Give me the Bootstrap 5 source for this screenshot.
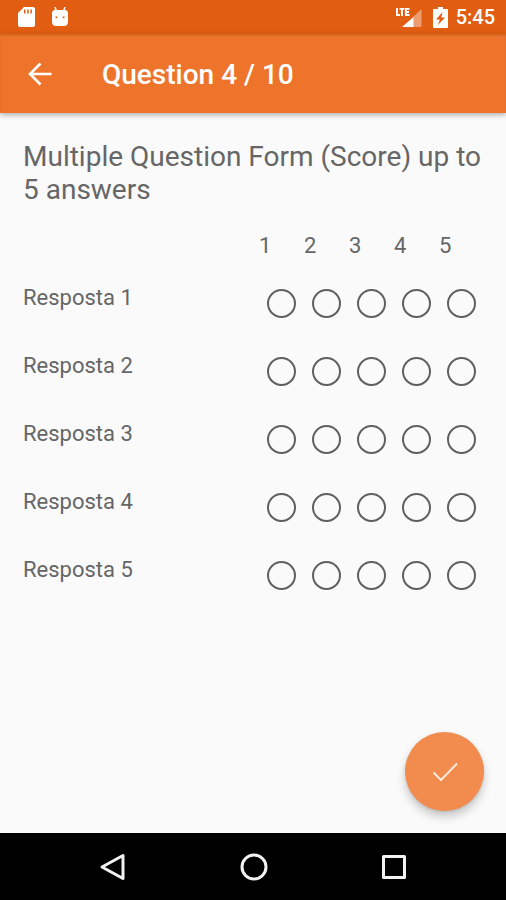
<!DOCTYPE html>
<html lang="en">
<head>
<meta charset="utf-8">
<meta name="viewport" content="width=device-width, initial-scale=1">
<title>Question 4 / 10</title>
<link href="https://cdn.jsdelivr.net/npm/bootstrap@5.3.0/dist/css/bootstrap.min.css" rel="stylesheet">
<style>
  body { font-family: Roboto, sans-serif; background: #fafafa; color: #666; }
  .status-bar { background: #e05d11; height: 34px; padding: 0 11px 0 18px; font-size: 20px; line-height: 36px; }
  .app-bar { background: #ee742c; height: 79px; padding: 0 22px; box-shadow: 0 2px 5px rgba(0,0,0,.3), inset 0 2px 3px -1px rgba(150,60,0,.4); }
  .app-title { font-size: 28px; line-height: 32px; margin-left: 44px; padding-top: 2px; }
  .icon-btn { width: 36px; height: 36px; }
  .page-body { padding: 27px 22px 22px 23px; }
  .question { font-size: 28px; line-height: 33px; font-weight: 400; }
  .score-grid { table-layout: fixed; font-size: 22px; line-height: 26px; margin-top: 27px; }
  .score-grid th { font-weight: 400; padding: 0; vertical-align: top; }
  .score-col { width: 45px; }
  .score-grid thead th { height: 40px; }
  .score-grid tbody th { height: 68px; padding-top: 12px; }
  .score-grid td { height: 68px; padding: 16px 0 0 8px; vertical-align: top; }
  .score-radio.form-check-input { width: 29px; height: 29px; border: 2px solid #606060; background-color: transparent; }
  .score-radio.form-check-input:checked { background-color: #ee742c; border-color: #ee742c; }
  .fab { width: 79px; height: 79px; background: #f18b4e; box-shadow: 0 6px 10px rgba(0,0,0,.2), 0 1px 3px rgba(0,0,0,.1); }
  .system-nav { height: 67px; padding: 0 78px 0 79px; }
  .nav-key { width: 68px; height: 48px; }
</style>
<script src="https://cdn.jsdelivr.net/npm/bootstrap@5.3.0/dist/js/bootstrap.bundle.min.js" defer></script>
</head>
<body>
<div class="d-flex flex-column min-vh-100">
  <div class="status-bar d-flex align-items-center text-white fw-medium">
    <svg width="17" height="21" viewBox="0 0 17 21" aria-hidden="true"><path fill="#fff" fill-rule="evenodd" d="M6 0h9q2 0 2 2v16q0 2-2 2H2q-2 0-2-2V6zM6 2.500v4h1.500v-4zm3.200 0v4h1.500v-4zm3.200 0v4h1.500v-4z"/></svg>
    <svg class="ms-3" width="18" height="20" viewBox="0 0 18 20" aria-hidden="true"><path stroke="#fff" stroke-width="1.500" d="M4 0l1.500 4M14 0l-1.500 4"/><path fill="#fff" fill-rule="evenodd" d="M3 3h12l2 2V15q0 4-4 4H5q-4 0-4-4V5zM4.500 9.500v1.800h1.800V9.500zm7.200 0v1.800h1.800V9.500z"/></svg>
    <svg class="ms-auto" width="29" height="22" viewBox="0 0 29 22" role="img" aria-label="LTE signal">
      <path fill="#fff" opacity=".4" d="M25.500 3v18H17V11z"/><path fill="#fff" d="M17.500 11v10H6z"/>
      <path fill="none" stroke="#fff" stroke-width="1.900" d="M1 2v7h3M3.500 2.900h5M6 3v7M13.500 2.900H10V9H13.500M10 6h3"/>
    </svg>
    <svg class="ms-2" width="15" height="21" viewBox="0 0 15 21" role="img" aria-label="Charging"><path fill="#fff" d="M5 0h5v2h4q1 0 1 1v17q0 1-1 1H1q-1 0-1-1V3q0-1 1-1h4z"/><path fill="#e05d11" d="M9.500 5L3 12.500h3.800L5 18l7-7.500H8.200z"/></svg>
    <span class="ms-2">5:45</span>
  </div>
  <header class="app-bar d-flex align-items-center">
    <button type="button" class="icon-btn btn p-0 border-0 d-flex align-items-center justify-content-center" aria-label="Back">
      <svg width="24" height="24" viewBox="0 0 24 24" fill="none" stroke="#fff" stroke-width="2.600"><path d="M23.500 12H3M12.500 1.500L2 12l10.500 10.500"/></svg>
    </button>
    <h1 class="app-title mb-0 text-white fw-medium">Question 4 / 10</h1>
  </header>
  <main class="page-body flex-grow-1 d-flex">
    <form class="w-100 d-flex flex-column">
      <h2 class="question mb-0">Multiple Question Form (Score) up to 5 answers</h2>
      <table class="score-grid w-100">
        <colgroup><col><col class="score-col"><col class="score-col"><col class="score-col"><col class="score-col"><col class="score-col"></colgroup>
        <thead><tr><td class="p-0 h-auto"></td><th scope="col">1</th><th scope="col">2</th><th scope="col">3</th><th scope="col">4</th><th scope="col">5</th></tr></thead>
        <tbody>
          <tr><th scope="row">Resposta 1</th>
            <td><input class="score-radio form-check-input d-block m-0" type="radio" name="r1" value="1" aria-label="Resposta 1: 1"></td>
            <td><input class="score-radio form-check-input d-block m-0" type="radio" name="r1" value="2" aria-label="Resposta 1: 2"></td>
            <td><input class="score-radio form-check-input d-block m-0" type="radio" name="r1" value="3" aria-label="Resposta 1: 3"></td>
            <td><input class="score-radio form-check-input d-block m-0" type="radio" name="r1" value="4" aria-label="Resposta 1: 4"></td>
            <td><input class="score-radio form-check-input d-block m-0" type="radio" name="r1" value="5" aria-label="Resposta 1: 5"></td></tr>
          <tr><th scope="row">Resposta 2</th>
            <td><input class="score-radio form-check-input d-block m-0" type="radio" name="r2" value="1" aria-label="Resposta 2: 1"></td>
            <td><input class="score-radio form-check-input d-block m-0" type="radio" name="r2" value="2" aria-label="Resposta 2: 2"></td>
            <td><input class="score-radio form-check-input d-block m-0" type="radio" name="r2" value="3" aria-label="Resposta 2: 3"></td>
            <td><input class="score-radio form-check-input d-block m-0" type="radio" name="r2" value="4" aria-label="Resposta 2: 4"></td>
            <td><input class="score-radio form-check-input d-block m-0" type="radio" name="r2" value="5" aria-label="Resposta 2: 5"></td></tr>
          <tr><th scope="row">Resposta 3</th>
            <td><input class="score-radio form-check-input d-block m-0" type="radio" name="r3" value="1" aria-label="Resposta 3: 1"></td>
            <td><input class="score-radio form-check-input d-block m-0" type="radio" name="r3" value="2" aria-label="Resposta 3: 2"></td>
            <td><input class="score-radio form-check-input d-block m-0" type="radio" name="r3" value="3" aria-label="Resposta 3: 3"></td>
            <td><input class="score-radio form-check-input d-block m-0" type="radio" name="r3" value="4" aria-label="Resposta 3: 4"></td>
            <td><input class="score-radio form-check-input d-block m-0" type="radio" name="r3" value="5" aria-label="Resposta 3: 5"></td></tr>
          <tr><th scope="row">Resposta 4</th>
            <td><input class="score-radio form-check-input d-block m-0" type="radio" name="r4" value="1" aria-label="Resposta 4: 1"></td>
            <td><input class="score-radio form-check-input d-block m-0" type="radio" name="r4" value="2" aria-label="Resposta 4: 2"></td>
            <td><input class="score-radio form-check-input d-block m-0" type="radio" name="r4" value="3" aria-label="Resposta 4: 3"></td>
            <td><input class="score-radio form-check-input d-block m-0" type="radio" name="r4" value="4" aria-label="Resposta 4: 4"></td>
            <td><input class="score-radio form-check-input d-block m-0" type="radio" name="r4" value="5" aria-label="Resposta 4: 5"></td></tr>
          <tr><th scope="row">Resposta 5</th>
            <td><input class="score-radio form-check-input d-block m-0" type="radio" name="r5" value="1" aria-label="Resposta 5: 1"></td>
            <td><input class="score-radio form-check-input d-block m-0" type="radio" name="r5" value="2" aria-label="Resposta 5: 2"></td>
            <td><input class="score-radio form-check-input d-block m-0" type="radio" name="r5" value="3" aria-label="Resposta 5: 3"></td>
            <td><input class="score-radio form-check-input d-block m-0" type="radio" name="r5" value="4" aria-label="Resposta 5: 4"></td>
            <td><input class="score-radio form-check-input d-block m-0" type="radio" name="r5" value="5" aria-label="Resposta 5: 5"></td></tr>
        </tbody>
      </table>
      <button type="submit" class="fab btn rounded-circle border-0 p-0 mt-auto ms-auto d-flex align-items-center justify-content-center" aria-label="Confirm">
        <svg width="26" height="20" viewBox="0 0 26 20" fill="none" stroke="#ffe9d8" stroke-width="2"><path d="M1.500 10.500l7.500 7.500L25 1.500"/></svg>
      </button>
    </form>
  </main>
  <nav class="system-nav bg-black d-flex align-items-center justify-content-between" aria-label="System">
    <button type="button" class="nav-key btn p-0 border-0" aria-label="System back"><svg width="28" height="28" viewBox="0 0 28 28" fill="none" stroke="#f2f2f2" stroke-width="3" stroke-linejoin="round"><path d="M24 2.500v23L3 14z"/></svg></button>
    <button type="button" class="nav-key btn p-0 border-0" aria-label="Home"><svg width="28" height="28" viewBox="0 0 28 28" fill="none" stroke="#f2f2f2" stroke-width="3"><circle cx="14" cy="14" r="12"/></svg></button>
    <button type="button" class="nav-key btn p-0 border-0" aria-label="Recent apps"><svg width="28" height="28" viewBox="0 0 28 28" fill="none" stroke="#f2f2f2" stroke-width="3" stroke-linejoin="round"><path d="M3.500 3.500h21v21h-21z"/></svg></button>
  </nav>
</div>
</body>
</html>
